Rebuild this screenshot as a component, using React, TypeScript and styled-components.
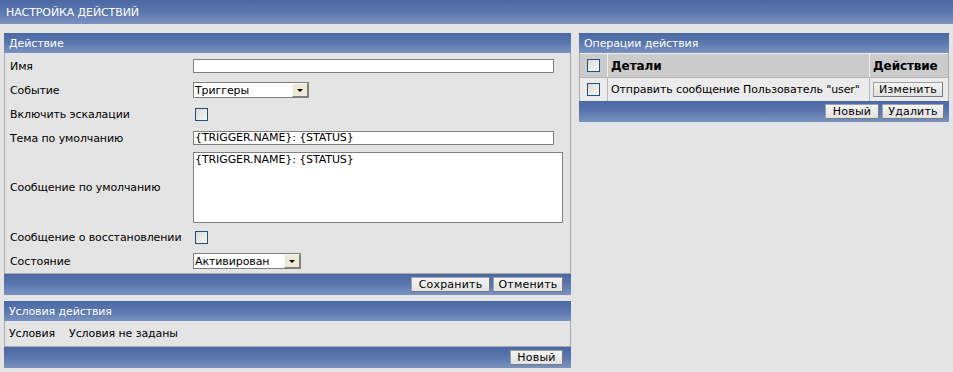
import React from "react";
import styled, { createGlobalStyle } from "styled-components";

const Global = createGlobalStyle`
  html, body { margin: 0; padding: 0; background: #e4e4e4; }
  body { font-family: "DejaVu Sans", Verdana, sans-serif; font-size: 11px; letter-spacing: -0.1px; color: #000; }
  * { box-sizing: border-box; }
`;

const blueGrad = `linear-gradient(to bottom, #4a68a4 0%, #5a77ae 50%, #7a93c0 100%)`;

const TopBar = styled.div`
  height: 24px;
  background: ${blueGrad};
  color: #fff;
  display: flex;
  align-items: center;
  padding-left: 6px;
  font-size: 11px;
`;

const Columns = styled.div`
  display: flex;
  gap: 8px;
  padding: 9px 4px 0 4px;
  align-items: flex-start;
`;

const LeftCol = styled.div`
  width: 567px;
  display: flex;
  flex-direction: column;
  gap: 6px;
`;

const RightCol = styled.div`
  width: 370px;
`;

const PanelHead = styled.div`
  height: 20px;
  background: ${blueGrad};
  color: #fff;
  display: flex;
  align-items: center;
  padding-left: 5px;
`;

const PanelBody = styled.div`
  border: 1px solid #a9a9a9;
  border-top: none;
  background: #e4e4e4;
`;

const FormGrid = styled.div`
  display: grid;
  grid-template-columns: 183px 1fr;
  padding: 1px 0 0 5px;
`;

const Label = styled.div<{ $h?: number }>`
  height: ${(p) => p.$h ?? 24}px;
  display: flex;
  align-items: center;
`;

const Field = styled.div<{ $h?: number }>`
  height: ${(p) => p.$h ?? 24}px;
  display: flex;
  align-items: center;
`;

const TextInput = styled.div`
  width: 361px;
  height: 14px;
  background: #fff;
  border: 1px solid #7f7f7f;
  font-size: 11px;
  line-height: 12px;
  padding-left: 1px;
  white-space: nowrap;
`;

const TextArea = styled.div`
  width: 370px;
  height: 71px;
  background: #fff;
  border: 1px solid #7f7f7f;
  padding: 1px 1px;
  line-height: 12px;
`;

const Select = styled.div<{ $w: number }>`
  width: ${(p) => p.$w}px;
  height: 16px;
  background: #fff;
  border: 1px solid #7f7f7f;
  display: flex;
  align-items: center;
  justify-content: space-between;
  padding-left: 1px;
`;

const SelectBtn = styled.div`
  width: 16px;
  height: 14px;
  background: #ece9d8;
  border: 1px solid #f8f8f4;
  border-right-color: #808080;
  border-bottom-color: #808080;
  display: flex;
  align-items: center;
  justify-content: center;
  &::after {
    content: "";
    border-left: 3px solid transparent;
    border-right: 3px solid transparent;
    border-top: 3px solid #000;
  }
`;

const Check = styled.div<{ $ml?: number }>`
  width: 13px;
  height: 13px;
  border: 1px solid #1c5180;
  background: linear-gradient(135deg, #dcdcd6 0%, #f7f7f5 100%);
  margin-left: ${(p) => p.$ml ?? 2}px;
`;

const Footer = styled.div<{ $pr?: number }>`
  height: 21px;
  background: ${blueGrad};
  display: flex;
  justify-content: flex-end;
  align-items: center;
  gap: 3px;
  padding-right: ${(p) => p.$pr ?? 8}px;
`;

const Button = styled.button<{ $w: number }>`
  width: ${(p) => p.$w}px;
  height: 15px;
  padding: 0;
  font-family: "DejaVu Sans", Verdana, sans-serif;
  font-size: 11px;
  color: #000;
  background: linear-gradient(to bottom, #f4f4f4 0%, #e2e2e2 100%);
  border: 1px solid #7a7a7a;
  border-top-color: #a0a0a0;
  border-left-color: #a0a0a0;
  line-height: 13px;
  letter-spacing: 0.2px;
`;

const CondRow = styled.div`
  height: 25px;
  display: flex;
  align-items: center;
  gap: 14px;
  padding-left: 4px;
`;

const Table = styled.div`
  display: grid;
  grid-template-columns: 27px 262px 1fr;
  border-left: 1px solid #a9a9a9;
  border-right: 1px solid #a9a9a9;
  background: #a9a9a9;
`;

const HeadCell = styled.div<{ $first?: boolean }>`
  height: 24px;
  background: #cbcbcb;
  border-top: 1px solid #f0f0f0;
  border-left: ${(p) => (p.$first ? "none" : "1px solid #efefef")};
  display: flex;
  align-items: center;
  justify-content: ${(p) => (p.$first ? "center" : "flex-start")};
  padding-left: ${(p) => (p.$first ? 0 : 3)}px;
  font-weight: bold;
  font-size: 12px;
`;

const Cell = styled.div<{ $first?: boolean }>`
  height: 24px;
  background: #ebebeb;
  border-top: 1px solid #b7b7b7;
  border-left: ${(p) => (p.$first ? "none" : "1px solid #b7b7b7")};
  display: flex;
  align-items: center;
  justify-content: ${(p) => (p.$first ? "center" : "flex-start")};
  padding-left: ${(p) => (p.$first ? 0 : 3)}px;
  white-space: nowrap;
`;

const rows: { label: string; h?: number; field: React.ReactNode }[] = [
  { label: "Имя", field: <TextInput /> },
  {
    label: "Событие",
    field: (
      <Select $w={116}>
        <span>Триггеры</span>
        <SelectBtn />
      </Select>
    ),
  },
  { label: "Включить эскалации", field: <Check /> },
  { label: "Тема по умолчанию", field: <TextInput>{"{TRIGGER.NAME}: {STATUS}"}</TextInput> },
  {
    label: "Сообщение по умолчанию",
    h: 75,
    field: <TextArea>{"{TRIGGER.NAME}: {STATUS}"}</TextArea>,
  },
  { label: "Сообщение о восстановлении", field: <Check /> },
  {
    label: "Состояние",
    field: (
      <Select $w={108}>
        <span>Активирован</span>
        <SelectBtn />
      </Select>
    ),
  },
];

export default function App() {
  return (
    <>
      <Global />
      <TopBar>НАСТРОЙКА ДЕЙСТВИЙ</TopBar>
      <Columns>
        <LeftCol>
          <div>
            <PanelHead>Действие</PanelHead>
            <PanelBody>
              <FormGrid>
                {rows.map((r) => (
                  <React.Fragment key={r.label}>
                    <Label $h={r.h}>{r.label}</Label>
                    <Field $h={r.h}>{r.field}</Field>
                  </React.Fragment>
                ))}
              </FormGrid>
            </PanelBody>
            <Footer>
              <Button $w={79}>Сохранить</Button>
              <Button $w={70}>Отменить</Button>
            </Footer>
          </div>
          <div>
            <PanelHead>Условия действия</PanelHead>
            <PanelBody>
              <CondRow>
                <span>Условия</span>
                <span>Условия не заданы</span>
              </CondRow>
            </PanelBody>
            <Footer>
              <Button $w={53}>Новый</Button>
            </Footer>
          </div>
        </LeftCol>
        <RightCol>
          <PanelHead>Операции действия</PanelHead>
          <Table>
            <HeadCell $first>
              <Check $ml={0} />
            </HeadCell>
            <HeadCell>Детали</HeadCell>
            <HeadCell>Действие</HeadCell>
            <Cell $first>
              <Check $ml={0} />
            </Cell>
            <Cell>Отправить сообщение Пользователь "user"</Cell>
            <Cell>
              <Button $w={70}>Изменить</Button>
            </Cell>
          </Table>
          <Footer $pr={5}>
            <Button $w={54}>Новый</Button>
            <Button $w={62}>Удалить</Button>
          </Footer>
        </RightCol>
      </Columns>
    </>
  );
}
